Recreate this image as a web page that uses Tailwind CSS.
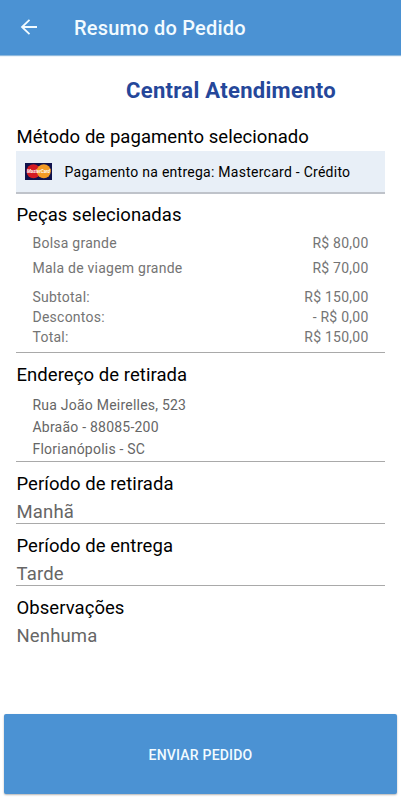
<!DOCTYPE html>
<html lang="pt-BR">
<head>
<meta charset="utf-8">
<title>Resumo do Pedido</title>
<script src="https://cdn.jsdelivr.net/npm/@tailwindcss/browser@4"></script>
</head>
<body class="bg-white font-['Roboto',sans-serif] text-black">
<div class="flex h-[800px] w-[401px] flex-col overflow-hidden whitespace-nowrap">
  <header class="flex h-[55px] shrink-0 items-center bg-[#4b92d3] pl-5 text-[#f2fbff] shadow-[0_1px_1px_#8fb9dd]">
    <svg class="mb-[2px] h-4 w-[17px]" viewBox="0 0 17 16" fill="none" stroke="currentColor" stroke-width="1.8"><path d="M17 8H2M9.500 .8L2 8l7.500 7.200"/></svg>
    <h1 class="ml-[37px] pt-px text-[20px] leading-6 font-medium tracking-[0.22px]">Resumo do Pedido</h1>
  </header>
  <main class="flex flex-col px-4">
    <h2 class="h-[68px] pl-[110px] text-[22px] leading-[71px] font-bold tracking-[0.31px] text-[#25479a]">Central Atendimento</h2>
    <h3 class="h-7 pl-[0.500px] text-[18.500px] leading-[28px] tracking-[0.06px]">Método de pagamento selecionado</h3>
    <div class="flex h-[43px] items-center border-b-2 border-[#bfc3ca] bg-[#e8eff7] pl-[9px]">
      <svg class="h-[17px] w-[27px]" viewBox="0 0 27 17"><path fill="#10124c" d="M0 0h27v17H0z"/><circle cx="8.500" cy="8.300" r="7" fill="#d41b23"/><circle cx="18.800" cy="8.300" r="7" fill="#f49b25"/><text x="2" y="10.300" textLength="23" lengthAdjust="spacingAndGlyphs" font-size="5" font-weight="700" font-style="italic" fill="#fff">MasterCard</text></svg>
      <span class="ml-[12.500px] pt-px text-[14px] leading-5 tracking-[0.26px]">Pagamento na entrega: Mastercard - Crédito</span>
    </div>
    <section class="flex h-[159px] flex-col border-b border-[#a9a9a9]">
      <h3 class="h-[37px] pl-[0.500px] text-[18.500px] leading-[43px] tracking-[0.06px]">Peças selecionadas</h3>
      <div class="flex flex-col pr-[16.500px] pl-[16.500px] text-[14px] tracking-[0.24px] text-[#747474]">
        <div class="flex h-[25px] items-center justify-between"><span>Bolsa grande</span><span>R$ 80,00</span></div>
        <div class="mb-[6px] flex h-[25px] items-center justify-between"><span>Mala de viagem grande</span><span>R$ 70,00</span></div>
        <div class="flex h-5 items-center justify-between"><span>Subtotal:</span><span>R$ 150,00</span></div>
        <div class="flex h-5 items-center justify-between"><span>Descontos:</span><span>- R$ 0,00</span></div>
        <div class="flex h-5 items-center justify-between"><span>Total:</span><span>R$ 150,00</span></div>
      </div>
    </section>
    <section class="h-[109px] border-b border-[#a9a9a9]">
      <h3 class="h-[41px] pl-[0.500px] text-[18.500px] leading-[45px] tracking-[0.06px]">Endereço de retirada</h3>
      <div class="pl-[16.500px] text-[14px] leading-[22px] tracking-[0.22px] text-[#666]">
        <p>Rua João Meirelles, 523</p>
        <p>Abraão - 88085-200</p>
        <p>Florianópolis - SC</p>
      </div>
    </section>
    <section class="h-[62px] border-b border-[#a9a9a9] pl-[0.500px] text-[18.500px]">
      <h3 class="h-9 leading-[44px] tracking-[0.05px]">Período de retirada</h3>
      <p class="leading-[28px] tracking-[0.15px] text-[#666]">Manhã</p>
    </section>
    <section class="h-[62px] border-b border-[#a9a9a9] pl-[0.500px] text-[18.500px]">
      <h3 class="h-9 leading-[44px] tracking-[0.05px]">Período de entrega</h3>
      <p class="leading-[28px] tracking-[0.15px] text-[#666]">Tarde</p>
    </section>
    <section class="pl-[0.500px] text-[18.500px]">
      <h3 class="h-9 leading-[44px] tracking-[0.05px]">Observações</h3>
      <p class="leading-[28px] tracking-[0.15px] text-[#666]">Nenhuma</p>
    </section>
  </main>
  <button class="mx-1 mt-auto mb-[6px] h-20 shrink-0 rounded-[2px] bg-[#4b92d3] pt-[2px] text-[14px] font-medium tracking-[0.2px] text-[#f2fbff] shadow-[0_1px_2px_rgba(0,0,0,0.3)]">ENVIAR PEDIDO</button>
</div>
</body>
</html>
